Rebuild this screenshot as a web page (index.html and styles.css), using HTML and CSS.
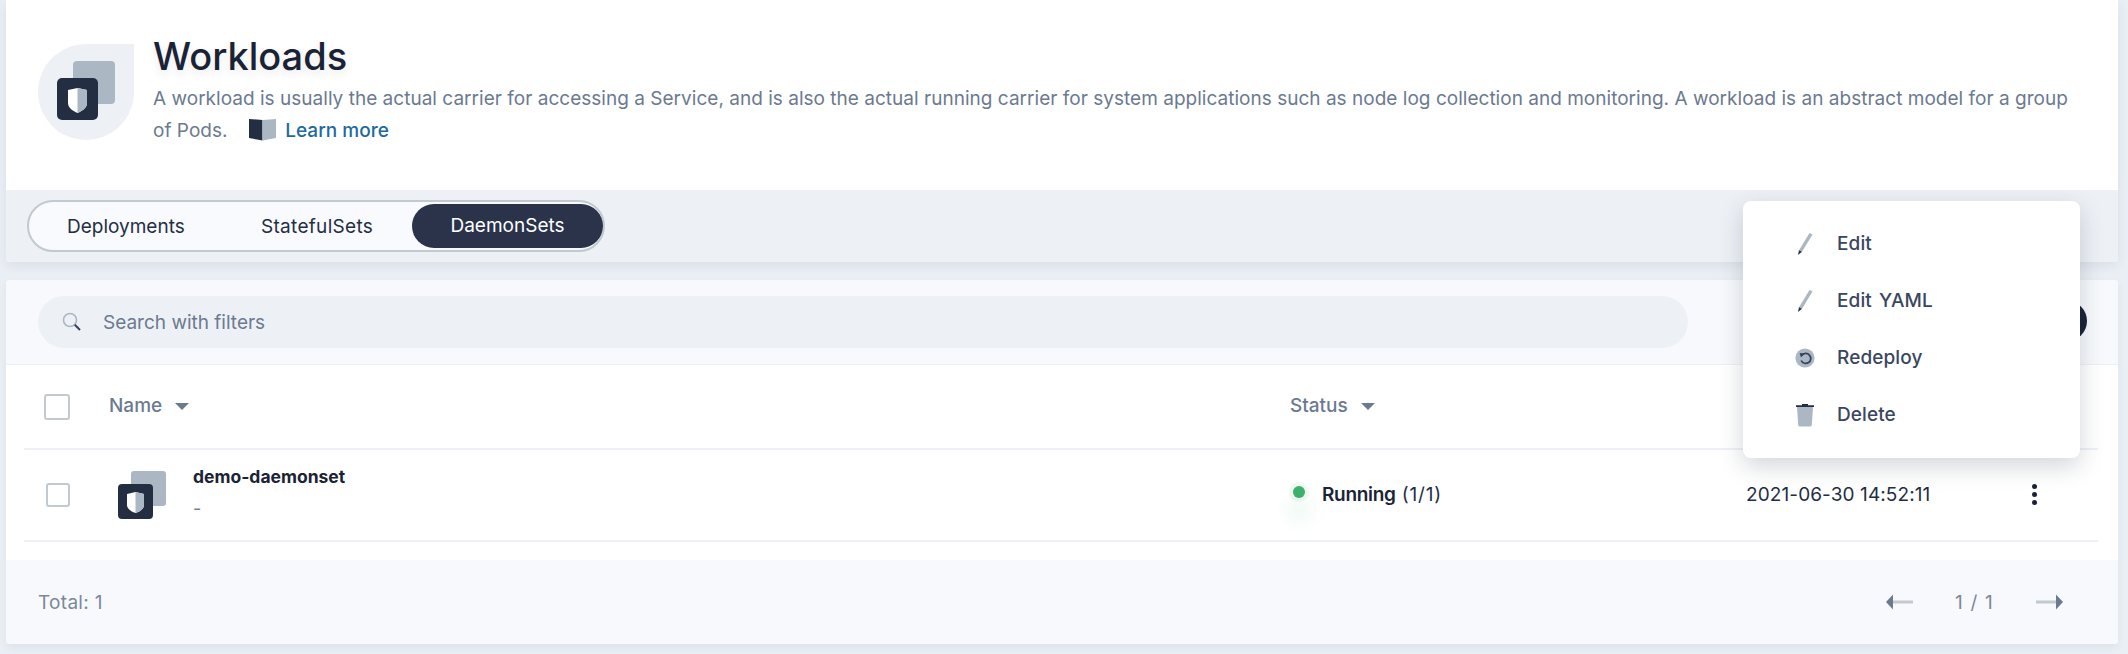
FILE: index.html
```html
<!DOCTYPE html>
<html lang="en">
<head>
    <meta charset="UTF-8">
    <title>Workloads</title>
    <link rel="stylesheet" href="styles.css">
</head>
<body>
    <div class="page">
        <div class="banner">
            <div class="banner-head">
                <div class="drop">
                    <svg class="drop-icon" width="58" height="59" viewBox="0 0 58 59">
                        <rect x="16" y="0" width="42" height="43" rx="4" fill="#abb8c3"/>
                        <rect x="0" y="17" width="41" height="42" rx="5" fill="#242e42"/>
                        <path d="M20.5 27 L30 29 V42 C30 47 25 50 20.5 52 C16 50 11 47 11 42 V29 Z" fill="#fff"/>
                        <path d="M20.5 27 L30 29 V42 C30 47 25 50 20.5 52 Z" fill="#abb8c3"/>
                    </svg>
                </div>
                <div class="banner-text">
                    <h1>Workloads</h1>
                    <p>A workload is usually the actual carrier for accessing a Service, and is also the actual running carrier for system applications such as node log collection and monitoring. A workload is an abstract model for a group<br>of Pods.
                        <svg class="book" width="27" height="22" viewBox="0 0 27 22">
                            <path d="M13.5 1 L0 0 V19 L13.5 21.5 Z" fill="#242e42"/>
                            <path d="M13.5 1 L27 0 V19 L13.5 21.5 Z" fill="#abb8c3"/>
                        </svg>
                        <a href="#">Learn more</a>
                    </p>
                </div>
            </div>
            <div class="tabbar">
                <div class="tabs">
                    <div class="tab tab-deploy">Deployments</div>
                    <div class="tab tab-stateful">StatefulSets</div>
                    <div class="tab tab-active">DaemonSets</div>
                </div>
            </div>
        </div>

        <div class="panel">
            <div class="toolbar">
                <div class="search">
                    <svg width="20" height="20" viewBox="0 0 20 20">
                        <circle cx="8" cy="8" r="6.5" fill="none" stroke="#abb8c3" stroke-width="1.6"/>
                        <path d="M12.8 12.8 L18 18" stroke="#36435c" stroke-width="2"/>
                    </svg>
                    <span>Search with filters</span>
                </div>
                <div class="create-btn"></div>
            </div>

            <div class="table">
                <div class="row head-row">
                    <div class="cell-check"><span class="check check-head"></span></div>
                    <div class="cell-name">Name <i class="caret"></i></div>
                    <div class="cell-status">Status <i class="caret"></i></div>
                    <div class="cell-date"></div>
                    <div class="cell-more"></div>
                </div>
                <div class="row body-row">
                    <div class="cell-check"><span class="check"></span></div>
                    <div class="cell-name name-wrap">
                        <svg width="48" height="48" viewBox="0 0 48 48">
                            <rect x="13" y="0" width="35" height="35" rx="3" fill="#abb8c3"/>
                            <rect x="0" y="13" width="35" height="35" rx="4" fill="#242e42"/>
                            <path d="M17.5 21 L26 23 V34 C26 38 21 41 17.5 42 C14 41 9 38 9 34 V23 Z" fill="#fff"/>
                            <path d="M17.5 21 L26 23 V34 C26 38 21 41 17.5 42 Z" fill="#abb8c3"/>
                        </svg>
                        <div class="name-text">
                            <strong>demo-daemonset</strong>
                            <span>-</span>
                        </div>
                    </div>
                    <div class="cell-status status-wrap">
                        <i class="dot"></i>
                        <span class="status-text"><b>Running</b> (1/1)</span>
                    </div>
                    <div class="cell-date date">2021-06-30 14:52:11</div>
                    <div class="cell-more"><div class="dots"><i></i><i></i><i></i></div></div>
                </div>
            </div>

            <div class="footer">
                <span>Total: 1</span>
                <div class="pager">
                    <svg width="27" height="16" viewBox="0 0 27 16">
                        <path d="M7 6.5 H27 V9.5 H7 Z" fill="#c1c9d1"/>
                        <path d="M0 8 L7 0.5 V15.5 H7 Z" fill="#6b7a90"/>
                    </svg>
                    <span class="pages">1 / 1</span>
                    <svg width="27" height="16" viewBox="0 0 27 16">
                        <path d="M0 6.5 H20 V9.5 H0 Z" fill="#c1c9d1"/>
                        <path d="M27 8 L20 0.5 V15.5 Z" fill="#6b7a90"/>
                    </svg>
                </div>
            </div>
        </div>
    </div>

    <div class="menu">
        <div class="menu-item">
            <svg width="20" height="24" viewBox="0 0 20 24">
                <path d="M14.5 1 L17.5 2.6 L7 19.8 L4 18.2 Z" fill="#abb8c3"/>
                <path d="M4 18.2 L7 19.8 L3 23 Z" fill="#242e42"/>
            </svg>
            Edit
        </div>
        <div class="menu-item">
            <svg width="20" height="24" viewBox="0 0 20 24">
                <path d="M14.5 1 L17.5 2.6 L7 19.8 L4 18.2 Z" fill="#abb8c3"/>
                <path d="M4 18.2 L7 19.8 L3 23 Z" fill="#242e42"/>
            </svg>
            Edit YAML
        </div>
        <div class="menu-item">
            <svg width="20" height="20" viewBox="0 0 20 20">
                <circle cx="10" cy="10" r="9.6" fill="#abb8c3"/>
                <path d="M6.8 7.4 A5 5 0 1 1 6.2 12.5" fill="none" stroke="#36435c" stroke-width="1.8"/>
                <path d="M4.6 5 L9.4 5.6 L6 9.4 Z" fill="#36435c"/>
            </svg>
            Redeploy
        </div>
        <div class="menu-item">
            <svg width="20" height="24" viewBox="0 0 20 24">
                <path d="M2 4 H18 L16.8 22 Q16.7 23.5 15 23.5 H5 Q3.3 23.5 3.2 22 Z" fill="#abb8c3"/>
                <path d="M1 2.2 H7 V1 H13 V2.2 H19 V4 H1 Z" fill="#242e42"/>
            </svg>
            Delete
        </div>
    </div>
</body>
</html>
```

FILE: styles.css
```css
html, body {
    margin: 0;
    padding: 0;
}
body {
    width: 2128px;
    height: 654px;
    overflow: hidden;
    background-color: #eaeff5;
    font-family: Inter, "Noto Sans", sans-serif;
    color: #242e42;
    position: relative;
}
.page {
    padding: 0 10px 10px 6px;
}
.banner {
    background: white;
    box-shadow: 0 4px 12px rgba(36,46,66,0.08);
    border-radius: 0 0 4px 4px;
}
.banner-head {
    height: 190px;
    box-sizing: border-box;
    padding: 34px 32px 0 32px;
    display: flex;
    gap: 19px;
}
.drop {
    width: 96px;
    height: 96px;
    margin-top: 10px;
    flex-shrink: 0;
    background-color: #edf1f6;
    border-radius: 50% 0 50% 50%;
    position: relative;
}
.drop-icon {
    margin: 17px 0 0 19px;
}
h1 {
    margin: 0;
    font-size: 38px;
    line-height: 44px;
    font-weight: 500;
    color: #1a2335;
    text-shadow: 0 4px 8px rgba(36,46,66,0.1);
}
p {
    margin: 5px 0 0;
    font-size: 19px;
    line-height: 32px;
    letter-spacing: 0.02px;
    color: #6b7a90;
}
.book {
    margin: 0 4px 0 16px;
    vertical-align: -4px;
}
a {
    color: #1c6a9e;
    text-decoration: none;
    font-weight: 500;
}
.tabbar {
    height: 72px;
    box-sizing: border-box;
    padding: 10px 21px;
    background-color: #edf1f6;
    border-radius: 0 0 4px 4px;
}
.tabs {
    width: 578px;
    height: 52px;
    box-sizing: border-box;
    border: 2px solid #c1c9d1;
    border-radius: 26px;
    background-color: #f8fafd;
    display: flex;
    align-items: center;
    font-size: 19px;
    padding: 0 0 0 38px;
}
.tab-deploy {
    width: 194px;
}
.tab-stateful {
    width: 151px;
    letter-spacing: 0.3px;
}
.tab-active {
    background-color: #2a3349;
    color: white;
    height: 44px;
    line-height: 44px;
    width: 191px;
    text-align: center;
    border-radius: 22px;
}
.panel {
    margin-top: 18px;
    background: white;
    border-radius: 4px;
    box-shadow: 0 4px 8px rgba(36,46,66,0.06);
    overflow: hidden;
}
.toolbar {
    height: 85px;
    box-sizing: border-box;
    padding: 16px 32px;
    background-color: #f7f9fc;
    border-bottom: 1px solid #edf1f6;
    display: flex;
    justify-content: space-between;
    align-items: flex-start;
}
.search {
    width: 1650px;
    height: 52px;
    box-sizing: border-box;
    padding: 0 24px;
    border-radius: 26px;
    background-color: #edf1f6;
    display: flex;
    align-items: center;
    gap: 21px;
    font-size: 19px;
    color: #6b7a90;
}
.create-btn {
    width: 40px;
    height: 40px;
    margin: 5px -1px 0 0;
    border-radius: 50%;
    background-color: #1a2335;
}
.table {
    padding: 0 20px 0 18px;
    height: 195px;
}
.row {
    display: flex;
    align-items: center;
    border-bottom: 2px solid #edf1f6;
    font-size: 19px;
    box-sizing: content-box;
}
.head-row {
    height: 81px;
    padding-bottom: 2px;
    color: #6b7a90;
    font-weight: 500;
}
.body-row {
    height: 88px;
    padding-bottom: 2px;
}
.cell-check {
    width: 85px;
    padding-left: 20px;
    box-sizing: border-box;
    display: flex;
    margin-top: 2px;
}
.check {
    width: 24px;
    height: 24px;
    border: 2px solid #c1c9d1;
    border-radius: 3px;
    box-sizing: border-box;
    background: white;
    margin-left: 2px;
}
.check-head {
    width: 26px;
    height: 26px;
    margin-left: 0;
}
.cell-name {
    width: 1181px;
    flex-shrink: 0;
}
.name-wrap {
    display: flex;
    align-items: center;
    gap: 27px;
    margin-top: 2px;
    padding-left: 9px;
    box-sizing: border-box;
}
.name-text {
    display: flex;
    flex-direction: column;
    margin-top: -4px;
}
.name-text strong {
    font-size: 17.5px;
    line-height: 31px;
    font-weight: 700;
    color: #1a2335;
}
.name-text span {
    font-size: 18px;
    line-height: 33px;
    color: #6b7a90;
}
.caret {
    display: inline-block;
    width: 0;
    height: 0;
    margin-left: 8px;
    vertical-align: 2px;
    border-left: 7px solid transparent;
    border-right: 7px solid transparent;
    border-top: 7px solid #6b7a90;
}
.cell-status {
    width: 456px;
    flex-shrink: 0;
}
.status-wrap {
    display: flex;
    align-items: center;
    gap: 17px;
    padding-left: 3px;
    box-sizing: border-box;
}
.status-text {
    letter-spacing: 0.8px;
}
.status-wrap b {
    font-weight: 600;
    letter-spacing: -0.3px;
    color: #1a2335;
}
.dot {
    width: 12px;
    height: 12px;
    margin-top: -4px;
    border-radius: 50%;
    background-color: #3db06c;
    box-shadow: 0 0 0 4px rgba(61,176,108,0.08), 0 18px 18px 4px rgba(61,176,108,0.12);
}
.cell-date {
    width: 286px;
    flex-shrink: 0;
    letter-spacing: 0.1px;
}
.dots {
    display: flex;
    flex-direction: column;
    gap: 3px;
    width: 5px;
}
.dots i {
    width: 5px;
    height: 5px;
    border-radius: 50%;
    background-color: #1a2335;
}
.footer {
    height: 84px;
    box-sizing: border-box;
    padding: 0 55px 0 32px;
    background-color: #f7f9fc;
    display: flex;
    justify-content: space-between;
    align-items: center;
    font-size: 19px;
    letter-spacing: 0.3px;
    color: #7a889d;
}
.pager {
    display: flex;
    align-items: center;
    gap: 42px;
}
.pages {
    letter-spacing: 1.2px;
}
.menu {
    position: absolute;
    left: 1743px;
    top: 201px;
    width: 337px;
    height: 257px;
    box-sizing: border-box;
    padding: 14px 0 0 52px;
    background: white;
    border-radius: 8px;
    box-shadow: 0 8px 24px rgba(36,46,66,0.2);
}
.menu-item {
    height: 57px;
    display: flex;
    align-items: center;
    gap: 22px;
    font-size: 19px;
    font-weight: 500;
    letter-spacing: 0.1px;
    word-spacing: 2px;
    color: #3a465f;
}
```
